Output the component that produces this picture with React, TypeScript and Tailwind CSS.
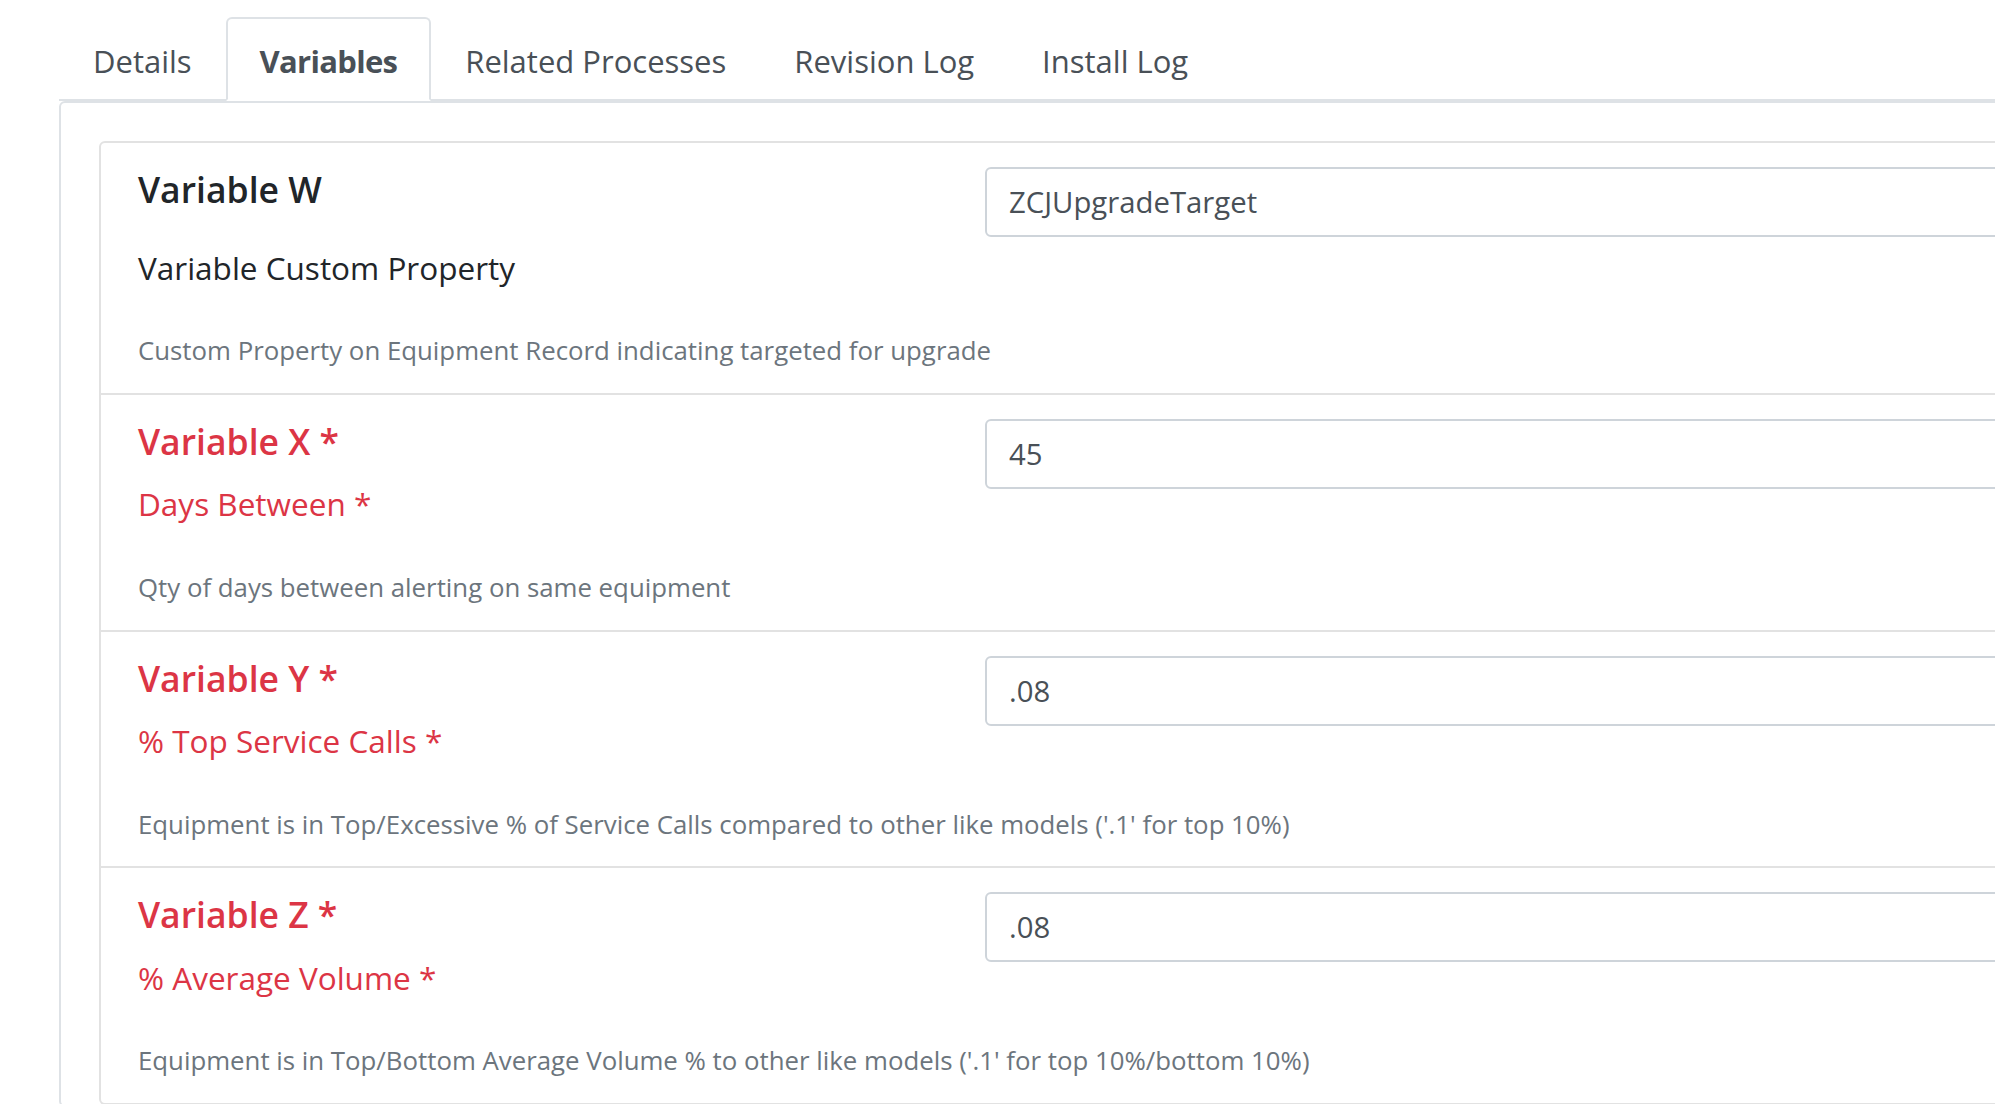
type ProcessVariable = {
  name: string;
  label: string;
  description: string;
  value: string;
  required: boolean;
};

const TABS = ["Details", "Variables", "Related Processes", "Revision Log", "Install Log"];

const VARIABLES: ProcessVariable[] = [
  {
    name: "Variable W",
    label: "Variable Custom Property",
    description: "Custom Property on Equipment Record indicating targeted for upgrade",
    value: "ZCJUpgradeTarget",
    required: false,
  },
  {
    name: "Variable X",
    label: "Days Between",
    description: "Qty of days between alerting on same equipment",
    value: "45",
    required: true,
  },
  {
    name: "Variable Y",
    label: "% Top Service Calls",
    description:
      "Equipment is in Top/Excessive % of Service Calls compared to other like models ('.1' for top 10%)",
    value: ".08",
    required: true,
  },
  {
    name: "Variable Z",
    label: "% Average Volume",
    description:
      "Equipment is in Top/Bottom Average Volume % to other like models ('.1' for top 10%/bottom 10%)",
    value: ".08",
    required: true,
  },
];

function VariableRow({ variable, isFirst }: { variable: ProcessVariable; isFirst: boolean }) {
  const titleColor = variable.required ? "text-[#dc3545]" : "text-[#212529]";

  return (
    <div className={`flex ${isFirst ? "" : "border-t-2 border-[#e2e2e2]"}`}>
      <div className="w-[884px] shrink-0 pl-[37px] pt-[29px] pb-[29px]">
        <h4 className={`text-[35.5px] leading-none font-semibold whitespace-nowrap ${titleColor}`}>
          {variable.name}
          {variable.required ? " *" : null}
        </h4>
        <div
          className={`text-[31.5px] leading-none whitespace-nowrap ${titleColor} ${
            variable.required ? "mt-[29px]" : "mt-[44px]"
          }`}
        >
          {variable.label}
          {variable.required ? " *" : null}
        </div>
        <p className="mt-[55px] text-[25.8px] leading-none whitespace-nowrap text-[#6c757d]">
          {variable.description}
        </p>
      </div>

      <div className="flex-1 pt-[24px] pr-[40px]">
        <input
          readOnly
          value={variable.value}
          className="h-[70px] w-full rounded-[6px] border-2 border-[#ced4da] bg-white px-[22px] text-[29.3px] leading-none text-[#495057] outline-none"
        />
      </div>
    </div>
  );
}

export default function App() {
  return (
    <div className="h-screen w-full overflow-hidden bg-white font-['Open_Sans',sans-serif]">
      <div className="w-[2300px] pt-[17px] pl-[59px]">
        <ul className="flex border-b-2 border-[#dee2e6]">
          {TABS.map((tab) => {
            const isActive = tab === "Variables";

            return (
              <li key={tab} className="-mb-[2px]">
                <button
                  type="button"
                  className={`rounded-t-[6px] border-2 px-[32px] pt-[27px] pb-[22px] text-[31px] leading-none text-[#495057] ${
                    isActive
                      ? "border-[#dee2e6] border-b-white bg-white font-bold tracking-[-0.7px]"
                      : "border-transparent"
                  }`}
                >
                  {tab}
                </button>
              </li>
            );
          })}
        </ul>

        <div className="rounded-[6px] border-2 border-[#dee2e6] pt-[38px] pl-[38px]">
          <div className="rounded-[6px] border-2 border-[#e2e2e2]">
            {VARIABLES.map((variable, index) => (
              <VariableRow key={variable.name} variable={variable} isFirst={index === 0} />
            ))}
          </div>
        </div>
      </div>
    </div>
  );
}
